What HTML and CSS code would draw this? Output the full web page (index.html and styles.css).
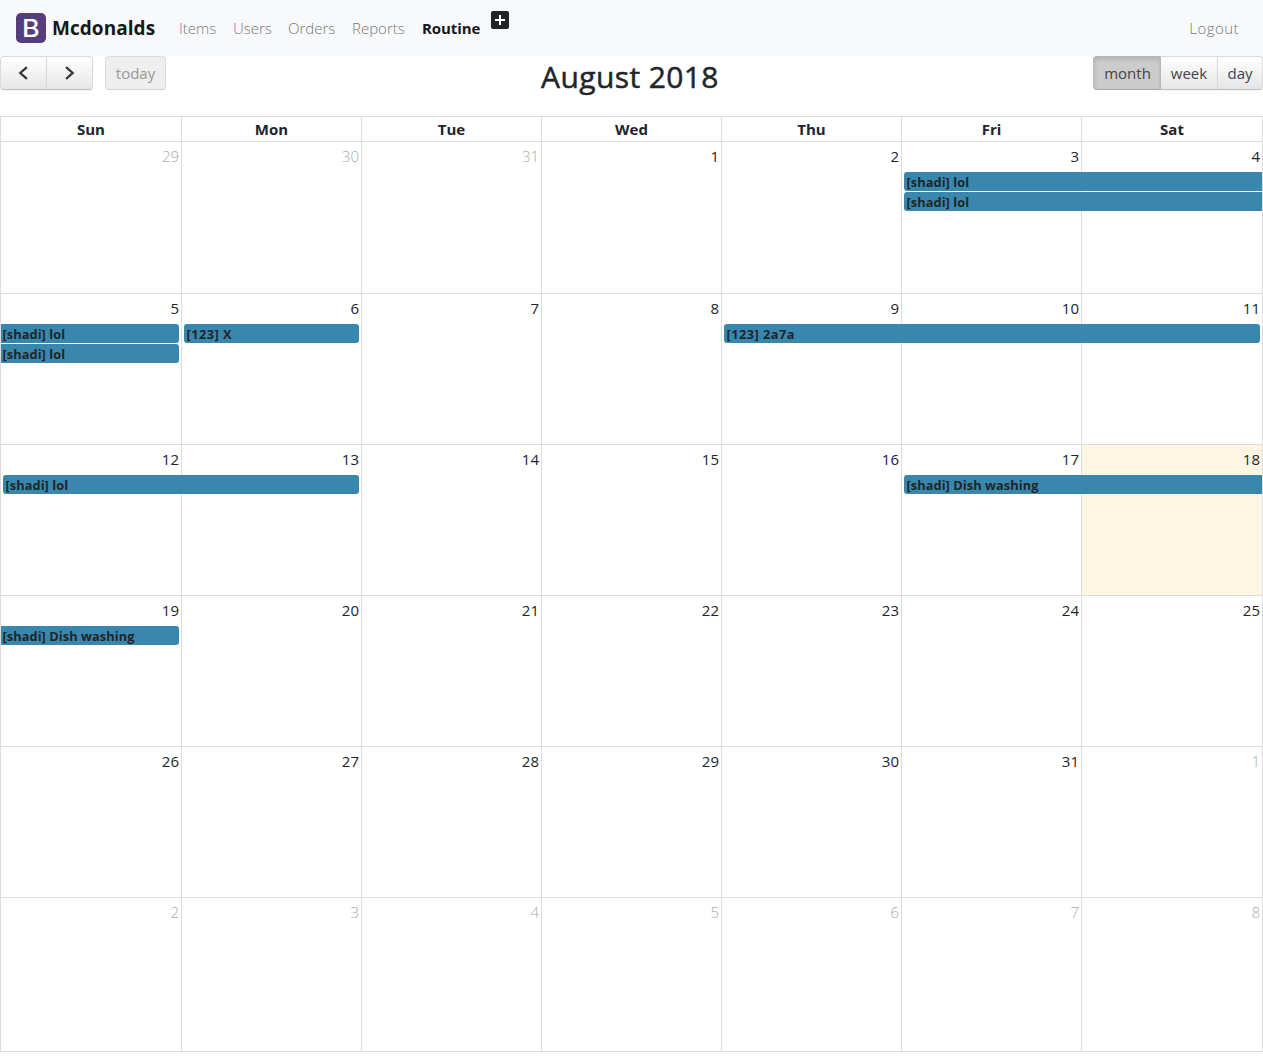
FILE: index.html
```html
<!DOCTYPE html>
<html lang="en">
<head>
<meta charset="utf-8">
<title>Mcdonalds</title>
<link rel="stylesheet" href="styles.css">
</head>
<body>
<nav class="navbar">
  <span class="logo"><span class="logo-letter">B</span></span>
  <a class="brand">Mcdonalds</a>
  <div class="links">
    <a class="w-items">Items</a><a class="w-users">Users</a><a class="w-orders">Orders</a><a class="w-reports">Reports</a><a class="w-routine active">Routine</a>
  </div>
  <svg class="plus" width="18" height="18" viewBox="0 0 18 18"><rect width="18" height="18" rx="2" fill="#212529"/><path d="M9 4v10M4 9h10" stroke="#fff" stroke-width="2"/></svg>
  <a class="logout">Logout</a>
</nav>
<header class="toolbar">
  <div class="side">
    <div class="group">
      <button class="btn arrow prev"><svg width="12" height="14" viewBox="0 0 12 14"><path d="M9.900 1.200L3.300 7l6.600 5.800" fill="none" stroke="#333" stroke-width="2.200"/></svg></button><button class="btn arrow"><svg width="12" height="14" viewBox="0 0 12 14"><path d="M2.100 1.200L8.700 7l-6.600 5.800" fill="none" stroke="#333" stroke-width="2.200"/></svg></button>
    </div>
    <button class="btn today-btn">today</button>
  </div>
  <h2>August 2018</h2>
  <div class="side end">
    <div class="group">
      <button class="btn month on">month</button><button class="btn week-btn">week</button><button class="btn day-btn">day</button>
    </div>
  </div>
</header>
<main class="calendar">
  <div class="heads"><b>Sun</b><b>Mon</b><b>Tue</b><b>Wed</b><b>Thu</b><b>Fri</b><b>Sat</b></div>
  <section class="week first">
    <div class="day c1 other">29</div><div class="day c2 other">30</div><div class="day c3 other">31</div><div class="day c4">1</div><div class="day c5">2</div><div class="day c6">3</div><div class="day c7">4</div>
    <a class="event r1 fri-sat to-next">[shadi] lol</a>
    <a class="event r2 fri-sat to-next">[shadi] lol</a>
  </section>
  <section class="week">
    <div class="day c1">5</div><div class="day c2">6</div><div class="day c3">7</div><div class="day c4">8</div><div class="day c5">9</div><div class="day c6">10</div><div class="day c7">11</div>
    <a class="event r1 sun from-prev">[shadi] lol</a>
    <a class="event r2 sun from-prev">[shadi] lol</a>
    <a class="event r1 mon digits">[123] X</a>
    <a class="event r1 thu-sat digits">[123] 2a7a</a>
  </section>
  <section class="week">
    <div class="day c1">12</div><div class="day c2">13</div><div class="day c3">14</div><div class="day c4">15</div><div class="day c5">16</div><div class="day c6">17</div><div class="day c7 today">18</div>
    <a class="event r1 sun-mon">[shadi] lol</a>
    <a class="event r1 fri-sat to-next">[shadi] Dish washing</a>
  </section>
  <section class="week">
    <div class="day c1">19</div><div class="day c2">20</div><div class="day c3">21</div><div class="day c4">22</div><div class="day c5">23</div><div class="day c6">24</div><div class="day c7">25</div>
    <a class="event r1 sun from-prev">[shadi] Dish washing</a>
  </section>
  <section class="week">
    <div class="day c1">26</div><div class="day c2">27</div><div class="day c3">28</div><div class="day c4">29</div><div class="day c5">30</div><div class="day c6">31</div><div class="day c7 other">1</div>
  </section>
  <section class="week last">
    <div class="day c1 other">2</div><div class="day c2 other">3</div><div class="day c3 other">4</div><div class="day c4 other">5</div><div class="day c5 other">6</div><div class="day c6 other">7</div><div class="day c7 other">8</div>
  </section>
</main>
</body>
</html>
```
FILE: styles.css
```css
* { box-sizing: border-box; }
body {
  margin: 0;
  background: #fff;
  color: #212529;
  font: 15px/24px "Open Sans", "Noto Sans", sans-serif;
}
.navbar {
  display: flex;
  align-items: center;
  height: 56px;
  padding: 0 24px 0 16px;
  background: #f8f9fb;
  white-space: nowrap;
}
.logo {
  width: 30px;
  height: 30px;
  border-radius: 5px;
  background: #563d7c;
  color: #fff;
  font: 500 24px/31px Inter, sans-serif;
  text-align: center;
}
.logo-letter { display: inline-block; transform: scaleX(1.12); }
.brand {
  width: 104px;
  margin-left: 6px;
  color: #17181a;
  font-size: 19px;
  font-weight: 700;
  letter-spacing: .05px;
}
.links {
  display: flex;
  gap: 16px;
  margin-left: 23px;
}
.links a, .logout { color: #77787a; font-weight: 300; }
.links a.active { color: #17181a; font-weight: 700; letter-spacing: -.1px; }
.w-items { width: 38px; }
.w-users { width: 39px; }
.w-orders { width: 48px; }
.w-reports { width: 54px; }
.w-routine { width: 59px; }
.plus { align-self: flex-start; margin: 11px 0 0 10px; }
.navbar .logout { margin-left: auto; letter-spacing: .45px; }
.toolbar {
  display: grid;
  grid-template-columns: 1fr auto 1fr;
  height: 60px;
}
.toolbar h2 {
  margin: 2px 3px 0 0;
  font-size: 30px;
  line-height: 38px;
  font-weight: 500;
  letter-spacing: .4px;
  -webkit-text-stroke: .5px #212529;
}
.side { display: flex; align-items: flex-start; gap: 12px; }
.end { justify-content: flex-end; }
.group { display: flex; }
.btn {
  display: flex;
  align-items: center;
  justify-content: center;
  height: 34px;
  margin: 0;
  padding: 0;
  border: 1px solid;
  border-color: #dadada #dadada #bfbfbf;
  border-radius: 4px;
  background: linear-gradient(#fff, #e6e6e6);
  box-shadow: 0 1px 2px rgba(0, 0, 0, .05);
  color: #444;
  font: 15px/24px "Open Sans", sans-serif;
}
.group .btn:not(:first-child) { margin-left: -1px; border-top-left-radius: 0; border-bottom-left-radius: 0; }
.group .btn:not(:last-child) { border-top-right-radius: 0; border-bottom-right-radius: 0; }
.arrow { width: 47px; }
.prev { padding-right: 2px; }
.today-btn {
  width: 61px;
  background: #eee;
  border-color: #dcdcdc #dcdcdc #d0d0d0;
  box-shadow: none;
  color: #999;
}
.month { width: 68px; }
.week-btn { width: 58px; }
.day-btn { width: 46px; }
.group .on {
  width: 69px;
  margin-right: -1px;
  background: #ccc;
  border-color: #b8b8b8 #b8b8b8 #a8a8a8;
  box-shadow: inset 0 2px 4px rgba(0, 0, 0, .15);
}
.on + .week-btn { border-left-color: #b8b8b8; }
.calendar {
  border-right: 1px solid #ddd;
  border-bottom: 1px solid #ddd;
}
.heads, .week {
  display: grid;
  grid-template-columns: 181px repeat(5, 180px) 181px;
}
.heads { height: 25px; }
.heads b {
  border-top: 1px solid #ddd;
  border-left: 1px solid #ddd;
  text-align: center;
  font-size: 15px;
  font-weight: 700;
}
.week { grid-template-rows: 31px 20px 20px 1fr; height: 151px; }
.first { height: 152px; }
.last { height: 154px; }
.day {
  grid-row: 1 / -1;
  border-top: 1px solid #ddd;
  border-left: 1px solid #ddd;
  padding: 2px 2px 0 0;
  text-align: right;
}
.other { color: #a8aaac; font-weight: 300; }
.today { background: #fdf6e2; }
.c1 { grid-column: 1; }
.c2 { grid-column: 2; }
.c3 { grid-column: 3; }
.c4 { grid-column: 4; }
.c5 { grid-column: 5; }
.c6 { grid-column: 6; }
.c7 { grid-column: 7; }
.event {
  height: 19px;
  margin: 0 2px 0 3px;
  padding-left: 2.5px;
  border-radius: 3px;
  background: #3a87ad;
  font-size: 12.8px;
  line-height: 20px;
  font-weight: 700;
  letter-spacing: .06px;
  white-space: nowrap;
}
.digits { letter-spacing: .45px; }
.r1 { grid-row: 2; }
.r2 { grid-row: 3; }
.sun { grid-column: 1; }
.mon { grid-column: 2; }
.sun-mon { grid-column: 1 / 3; }
.thu-sat { grid-column: 5 / 8; }
.fri-sat { grid-column: 6 / 8; }
.from-prev { margin-left: 1px; padding-left: 1.5px; border-top-left-radius: 0; border-bottom-left-radius: 0; }
.to-next { margin-right: 0; border-top-right-radius: 0; border-bottom-right-radius: 0; }
```
